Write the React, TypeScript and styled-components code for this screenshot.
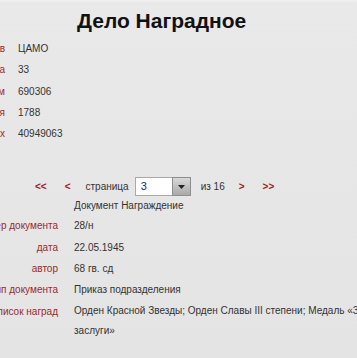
import React from "react";
import styled, { createGlobalStyle } from "styled-components";

const Global = createGlobalStyle`
  html, body {
    margin: 0;
    padding: 0;
    background: #e6e6e6;
    overflow: hidden;
  }
  body {
    font-family: "Liberation Sans", Arial, sans-serif;
    font-size: 10px;
    color: #333;
  }
`;

const Page = styled.div`
  width: 357px;
  height: 358px;
  overflow: hidden;
  background: linear-gradient(#e9e9e9, #e4e4e4);
  border-top: 2px solid #eeeeee;
  box-sizing: border-box;
`;

const Title = styled.h1`
  margin: 0;
  padding: 6px 0 0 77px;
  font-size: 21px;
  line-height: 26px;
  font-weight: bold;
  color: #111;
`;

const Table = styled.div<{ $label: number; $gap: number; $value: number }>`
  display: grid;
  grid-template-columns: ${(p) => p.$label}px ${(p) => p.$value}px;
  column-gap: ${(p) => p.$gap}px;
`;

const Label = styled.div`
  display: flex;
  justify-content: flex-end;
  white-space: nowrap;
  color: #9a2a2a;
  line-height: 21.3px;
`;

const Value = styled.div<{ $lh?: number }>`
  color: #333;
  line-height: ${(p) => p.$lh ?? 21.3}px;
`;

const TopTable = styled(Table)`
  margin-top: 4px;
`;

const Pager = styled.div`
  display: flex;
  align-items: center;
  margin-top: 32px;
  padding-left: 35px;
  height: 21px;
`;

const PagerItem = styled.span<{ $ml: number }>`
  margin-left: ${(p) => p.$ml}px;
  white-space: nowrap;
`;

const Arrow = styled(PagerItem)`
  color: #a01e1e;
  font-weight: bold;
  font-size: 10px;
`;

const Select = styled.div<{ $ml: number }>`
  margin-left: ${(p) => p.$ml}px;
  display: flex;
  height: 19px;
`;

const SelectInput = styled.div`
  width: 37px;
  height: 19px;
  box-sizing: border-box;
  background: #fff;
  border: 1px solid #a9a9a9;
  border-right: none;
  padding-left: 5px;
  line-height: 17px;
  font-size: 11px;
  color: #1c2a5c;
`;

const SelectButton = styled.div`
  width: 19px;
  height: 19px;
  box-sizing: border-box;
  border: 1px solid #8e8e8e;
  background: linear-gradient(#d8d8d8, #a9a9a9);
  display: flex;
  align-items: center;
  justify-content: center;
`;

const DocType = styled.div`
  padding-left: 74px;
  line-height: 18px;
`;

const BottomTable = styled(Table)`
  margin-top: 0px;
`;

const topRows: [string, string][] = [
  ["Архив", "ЦАМО"],
  ["Номер фонда", "33"],
  ["Номер описи по архивам", "690306"],
  ["Единица хранения", "1788"],
  ["№ записи в базе данных", "40949063"],
];

const bottomRows: [string, string][] = [
  ["Номер документа", "28/н"],
  ["дата", "22.05.1945"],
  ["автор", "68 гв. сд"],
  ["Тип документа", "Приказ подразделения"],
  ["Список наград", "Орден Красной Звезды; Орден Славы III степени; Медаль «За боевые заслуги»"],
];

export default function App() {
  return (
    <>
      <Global />
      <Page>
        <Title>Дело Наградное</Title>
        <TopTable $label={5} $gap={13} $value={300}>
          {topRows.map(([l, v]) => (
            <React.Fragment key={l}>
              <Label>
                <span>{l}</span>
              </Label>
              <Value>{v}</Value>
            </React.Fragment>
          ))}
        </TopTable>
        <Pager>
          <Arrow $ml={0}>&lt;&lt;</Arrow>
          <Arrow $ml={18}>&lt;</Arrow>
          <PagerItem $ml={15}>страница</PagerItem>
          <Select $ml={6}>
            <SelectInput>3</SelectInput>
            <SelectButton>
              <svg width="7" height="4" viewBox="0 0 7 4">
                <path d="M0 0 H7 L3.5 4 Z" fill="#222" />
              </svg>
            </SelectButton>
          </Select>
          <PagerItem $ml={10}>из 16</PagerItem>
          <Arrow $ml={14}>&gt;</Arrow>
          <Arrow $ml={18}>&gt;&gt;</Arrow>
        </Pager>
        <DocType>Документ Награждение</DocType>
        <BottomTable $label={58} $gap={16} $value={330}>
          {bottomRows.map(([l, v], i) => (
            <React.Fragment key={l}>
              <Label>
                <span>{l}</span>
              </Label>
              <Value $lh={i === 4 ? 20 : undefined}>{v}</Value>
            </React.Fragment>
          ))}
        </BottomTable>
      </Page>
    </>
  );
}
